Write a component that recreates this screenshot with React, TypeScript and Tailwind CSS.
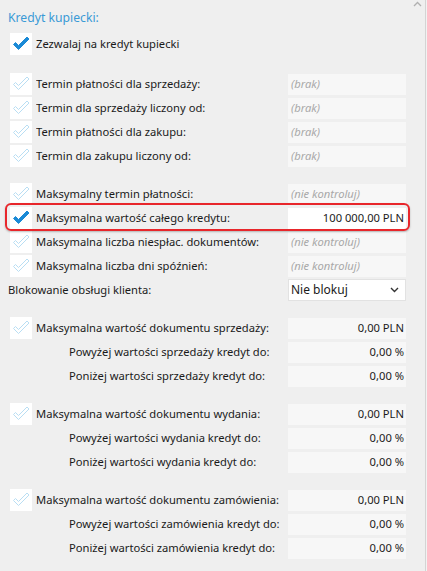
import React from "react";

const FONT = { fontFamily: '"Noto Sans", "Open Sans", Arial, sans-serif' };

function Check({ on }: { on: boolean }) {
  return (
    <div className="w-[22px] h-[22px] bg-white shrink-0 flex items-center justify-center">
      <svg width="22" height="22" viewBox="0 0 22 22">
        <polygon
          points="3.5,11.5 5.5,9.5 8.5,12.5 17,4 19,6 8.5,16.5"
          fill={on ? "#1b8ad6" : "#ffffff"}
          stroke={on ? "#1b8ad6" : "#b9def3"}
          strokeWidth="1"
          strokeLinejoin="round"
        />
      </svg>
    </div>
  );
}

function Field({ value, placeholder, white }: { value?: string; placeholder?: string; white?: boolean }) {
  return (
    <div
      className={`w-[118px] h-[21px] shrink-0 flex items-center ${white ? "bg-white" : "bg-[#f7f7f7]"} ${
        value ? "justify-end pr-[2px]" : "justify-start pl-[3px]"
      }`}
    >
      {value ? (
        <span className="text-[#1a1a1a]">{value}</span>
      ) : (
        <span className="italic text-[#a8a8a8]">{placeholder}</span>
      )}
    </div>
  );
}

function CheckRow({ label, on, value, placeholder, white }: { label: string; on?: boolean; value?: string; placeholder?: string; white?: boolean }) {
  return (
    <div className="h-[24px] flex items-center pl-[10px]">
      <Check on={!!on} />
      <span className="ml-[4px] flex-1 min-w-0 whitespace-nowrap overflow-hidden">{label}</span>
      <Field value={value} placeholder={placeholder} white={white} />
    </div>
  );
}

function SubRow({ label, value }: { label: string; value: string }) {
  return (
    <div className="h-[24px] flex items-center pl-[69px]">
      <span className="flex-1 min-w-0 whitespace-nowrap overflow-hidden">{label}</span>
      <Field value={value} />
    </div>
  );
}

export default function App() {
  return (
    <div
      className="relative w-[427px] h-[571px] bg-[#efefef] flex overflow-hidden text-[11.2px] text-[#1a1a1a]"
      style={FONT}
    >
      <div className="w-[425px] shrink-0 pr-[19px] pt-[7px] flex flex-col">
        <div className="h-[21px] leading-[21px] pl-[8px] text-[12.2px] text-[#3a9ad6]">Kredyt kupiecki:</div>
        <div className="mt-[4px] h-[24px] flex items-center pl-[10px]">
          <Check on />
          <span className="ml-[4px]">Zezwalaj na kredyt kupiecki</span>
        </div>

        <div className="mt-[16px] flex flex-col">
          <CheckRow label="Termin płatności dla sprzedaży:" placeholder="(brak)" />
          <CheckRow label="Termin dla sprzedaży liczony od:" placeholder="(brak)" />
          <CheckRow label="Termin płatności dla zakupu:" placeholder="(brak)" />
          <CheckRow label="Termin dla zakupu liczony od:" placeholder="(brak)" />
        </div>

        <div className="mt-[14px] flex flex-col">
          <CheckRow label="Maksymalny termin płatności:" placeholder="(nie kontroluj)" />
          <div className="relative">
            <div className="absolute left-[5px] right-[-4px] top-[-3px] bottom-[-1px] border-2 border-[#e8262b] rounded-[6px] shadow-[0_1px_2px_rgba(0,0,0,0.25)]" />
            <CheckRow label="Maksymalna wartość całego kredytu:" on value="100 000,00 PLN" white />
          </div>
          <CheckRow label="Maksymalna liczba niespłac. dokumentów:" placeholder="(nie kontroluj)" />
          <CheckRow label="Maksymalna liczba dni spóźnień:" placeholder="(nie kontroluj)" />
          <div className="h-[24px] flex items-center pl-[8px]">
            <span className="flex-1 whitespace-nowrap">Blokowanie obsługi klienta:</span>
            <div className="w-[118px] h-[22px] bg-white border border-[#e2e2e2] flex items-center justify-between pl-[2px] pr-[6px] text-[12px]">
              <span>Nie blokuj</span>
              <svg width="9" height="6" viewBox="0 0 9 6">
                <polyline points="1,1 4.5,4.5 8,1" fill="none" stroke="#333" strokeWidth="1.4" />
              </svg>
            </div>
          </div>
        </div>

        <div className="mt-[14px] flex flex-col">
          <CheckRow label="Maksymalna wartość dokumentu sprzedaży:" value="0,00 PLN" />
          <SubRow label="Powyżej wartości sprzedaży kredyt do:" value="0,00 %" />
          <SubRow label="Poniżej wartości sprzedaży kredyt do:" value="0,00 %" />
        </div>

        <div className="mt-[14px] flex flex-col">
          <CheckRow label="Maksymalna wartość dokumentu wydania:" value="0,00 PLN" />
          <SubRow label="Powyżej wartości wydania kredyt do:" value="0,00 %" />
          <SubRow label="Poniżej wartości wydania kredyt do:" value="0,00 %" />
        </div>

        <div className="mt-[14px] flex flex-col">
          <CheckRow label="Maksymalna wartość dokumentu zamówienia:" value="0,00 PLN" />
          <SubRow label="Powyżej wartości zamówienia kredyt do:" value="0,00 %" />
          <SubRow label="Poniżej wartości zamówienia kredyt do:" value="0,00 %" />
        </div>
      </div>
      <div className="w-[2px] shrink-0 h-full border-l border-[#d4d4d4] bg-[#f2f2f2]" />
      <div className="absolute left-[413px] top-[1px]">
        <svg width="9" height="6" viewBox="0 0 9 6">
          <polyline points="1,5 4.5,1.5 8,5" fill="none" stroke="#b0b0b0" strokeWidth="1.3" />
        </svg>
      </div>
    </div>
  );
}
